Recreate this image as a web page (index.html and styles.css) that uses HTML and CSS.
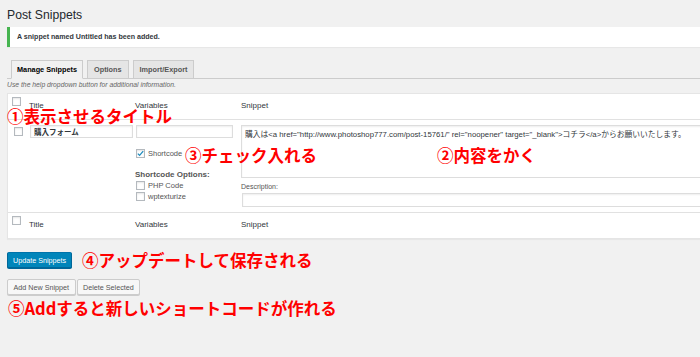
FILE: index.html
```html
<!DOCTYPE html>
<html lang="ja">
  <head>
    <meta charset="utf-8">
    <title>Post Snippets</title>
    <link rel="stylesheet" href="styles.css">
  </head>
  <body>
    <div class="wrap">
      <h1>Post Snippets</h1>

      <div class="notice">A snippet named Untitled has been added.</div>

      <nav class="tabs">
        <a class="tab active">Manage Snippets</a>
        <a class="tab">Options</a>
        <a class="tab">Import/Export</a>
      </nav>
      <p class="help">Use the help dropdown button for additional information.</p>

      <form>
        <div class="snippets">
          <div class="row head">
            <div class="cell check"><span class="box"></span></div>
            <div class="cell">Title</div>
            <div class="cell">Variables</div>
            <div class="cell">Snippet</div>
          </div>

          <div class="row body">
            <div class="cell check"><span class="box"></span></div>
            <div class="cell"><input class="field title" type="text" value="購入フォーム"></div>
            <div class="cell">
              <input class="field vars" type="text" value="">
              <label class="opt shortcode">
                <span class="box checked">
                  <svg width="9" height="9" viewBox="0 0 9 9"><path d="M1.8 4.6 L3.6 6.4 L7.2 2.2" fill="none" stroke="#1e8cbe" stroke-width="1.3"/></svg>
                </span>
                Shortcode
              </label>
              <div class="opt-title">Shortcode Options:</div>
              <label class="opt"><span class="box"></span>PHP Code</label>
              <label class="opt second"><span class="box"></span>wptexturize</label>
            </div>
            <div class="cell">
              <textarea class="field code">購入は&lt;a href="http://www.photoshop777.com/post-15761/" rel="noopener" target="_blank"&gt;コチラ&lt;/a&gt;からお願いいたします。</textarea>
              <div class="desc-label">Description:</div>
              <input class="field desc" type="text" value="">
            </div>
          </div>

          <div class="row foot">
            <div class="cell check"><span class="box"></span></div>
            <div class="cell">Title</div>
            <div class="cell">Variables</div>
            <div class="cell">Snippet</div>
          </div>
        </div>

        <div class="submit">
          <button class="btn primary" type="button">Update Snippets</button>
        </div>
        <div class="actions">
          <button class="btn" type="button">Add New Snippet</button>
          <button class="btn" type="button">Delete Selected</button>
        </div>
      </form>

      <!-- notes drawn over the screenshot -->
      <span class="note n1">①表示させるタイトル</span>
      <span class="note n2">②内容をかく</span>
      <span class="note n3">③チェック入れる</span>
      <span class="note n4">④アップデートして保存される</span>
      <span class="note n5">⑤Addすると新しいショートコードが作れる</span>
    </div>
  </body>
</html>
```

FILE: styles.css
```css
body {
  margin: 0;
  background: #f1f1f1;
  color: #23282d;
  font-family: "Liberation Sans", "Noto Sans CJK JP", sans-serif;
  font-size: 8px;
  overflow: hidden;
}

.wrap {
  position: relative;
  padding-left: 7px;
  height: 357px;
}

h1 {
  margin: 0;
  padding-top: 7px;
  font-size: 12.2px;
  font-weight: 400;
  line-height: 16px;
}

.notice {
  margin: 4px -30px 0 0;
  height: 20px;
  padding: 0 7px;
  line-height: 20px;
  background: #fff;
  border-left: 3px solid #46b450;
  box-shadow: 0 1px 1px rgba(0, 0, 0, .04);
  font-size: 7.1px;
  font-weight: 700;
  color: #32373c;
}

/* tabs */
.tabs {
  display: flex;
  gap: 4px;
  margin: 13px -30px 0 0;
  padding-left: 4px;
  border-bottom: 1px solid #ccc;
}
.tab {
  height: 17px;
  margin-bottom: -1px;
  padding: 0 5px;
  line-height: 17px;
  background: #e5e5e5;
  border: 1px solid #ccc;
  font-size: 7.3px;
  color: #555;
  font-weight: 700;
}
.tab.active {
  background: #f1f1f1;
  border-bottom-color: #f1f1f1;
  color: #000;
}
.tab + .tab {
  padding: 0 6px;
}

.help {
  margin: 0;
  font-size: 6.8px;
  font-style: italic;
  line-height: 11px;
  color: #666;
}

/* snippets table */
.snippets {
  margin: 3px -30px 0 0;
  background: #fff;
  border: 1px solid #e5e5e5;
  box-shadow: 0 1px 1px rgba(0, 0, 0, .04);
}
.row {
  display: grid;
  grid-template-columns: 21px 106px 106px 1fr;
}
.head {
  height: 25px;
  border-bottom: 1px solid #e1e1e1;
}
.head .cell,
.foot .cell {
  padding-top: 6px;
  line-height: 12px;
  color: #32373c;
}
.head .check,
.foot .check {
  padding: 3px 0 0 4px;
}
.foot {
  height: 25px;
  border-top: 1px solid #e1e1e1;
}
.body {
  padding: 5px 0 5px;
}
.body .check {
  padding: 2px 0 0 6px;
}

.box {
  display: inline-block;
  box-sizing: border-box;
  width: 9px;
  height: 9px;
  background: #fff;
  border: 1px solid #b4b9be;
  box-shadow: inset 0 1px 2px rgba(0, 0, 0, .1);
  vertical-align: top;
}
.box svg {
  display: block;
  margin: -1px 0 0 -1px;
}

.field {
  display: block;
  box-sizing: border-box;
  margin: 0 0 0 1px;
  padding: 0 3px;
  background: #fff;
  border: 1px solid #ddd;
  box-shadow: inset 0 1px 2px rgba(0, 0, 0, .07);
  font-family: "Liberation Sans", "Noto Sans CJK JP", sans-serif;
  font-size: 7.5px;
  color: #32373c;
  outline: none;
}
.title {
  width: 103px;
  height: 13px;
  font-weight: 700;
}
.vars {
  width: 97px;
  height: 13px;
}
.code {
  width: 100%;
  height: 53px;
  margin: 0;
  padding: 3px 3px;
  resize: none;
  font-size: 7.75px;
  line-height: 11px;
}
.desc-label {
  margin-top: 4px;
  line-height: 10px;
  font-size: 7px;
  color: #555;
}
.desc {
  width: 100%;
  height: 14px;
  margin: 1px 0 0 1px;
}

.opt {
  display: flex;
  align-items: center;
  gap: 3px;
  height: 9px;
  margin: 2px 0 0 1px;
  font-size: 7.5px;
  color: #555;
}
.shortcode {
  margin-top: 11px;
}
.opt-title {
  margin-top: 12px;
  line-height: 10px;
  font-weight: 700;
  color: #555;
}
.opt-title + .opt {
  margin-top: 1px;
}

/* buttons */
.submit {
  margin-top: 13px;
}
.actions {
  display: flex;
  gap: 1px;
  margin-top: 11px;
}
.btn {
  height: 16px;
  padding: 0 5.5px;
  background: #f7f7f7;
  border: 1px solid #ccc;
  border-radius: 2px;
  box-shadow: 0 1px 0 #ccc;
  font-family: "Liberation Sans", sans-serif;
  font-size: 7.2px;
  color: #555;
}
.btn.primary {
  padding: 0 5px;
  background: #0085ba;
  border-color: #0073aa #006799 #006799;
  box-shadow: 0 1px 0 #006799;
  color: #fff;
}

/* red annotations */
.note {
  position: absolute;
  font-family: "Noto Sans CJK JP", sans-serif;
  font-size: 16.5px;
  font-weight: 700;
  line-height: 16px;
  color: #f00;
  white-space: nowrap;
}
.n1 { left: 7px; top: 108px; }
.n2 { left: 437px; top: 147px; }
.n3 { left: 185px; top: 147px; }
.n4 { left: 82px; top: 252px; }
.n5 { left: 8px; top: 300px; }
```
